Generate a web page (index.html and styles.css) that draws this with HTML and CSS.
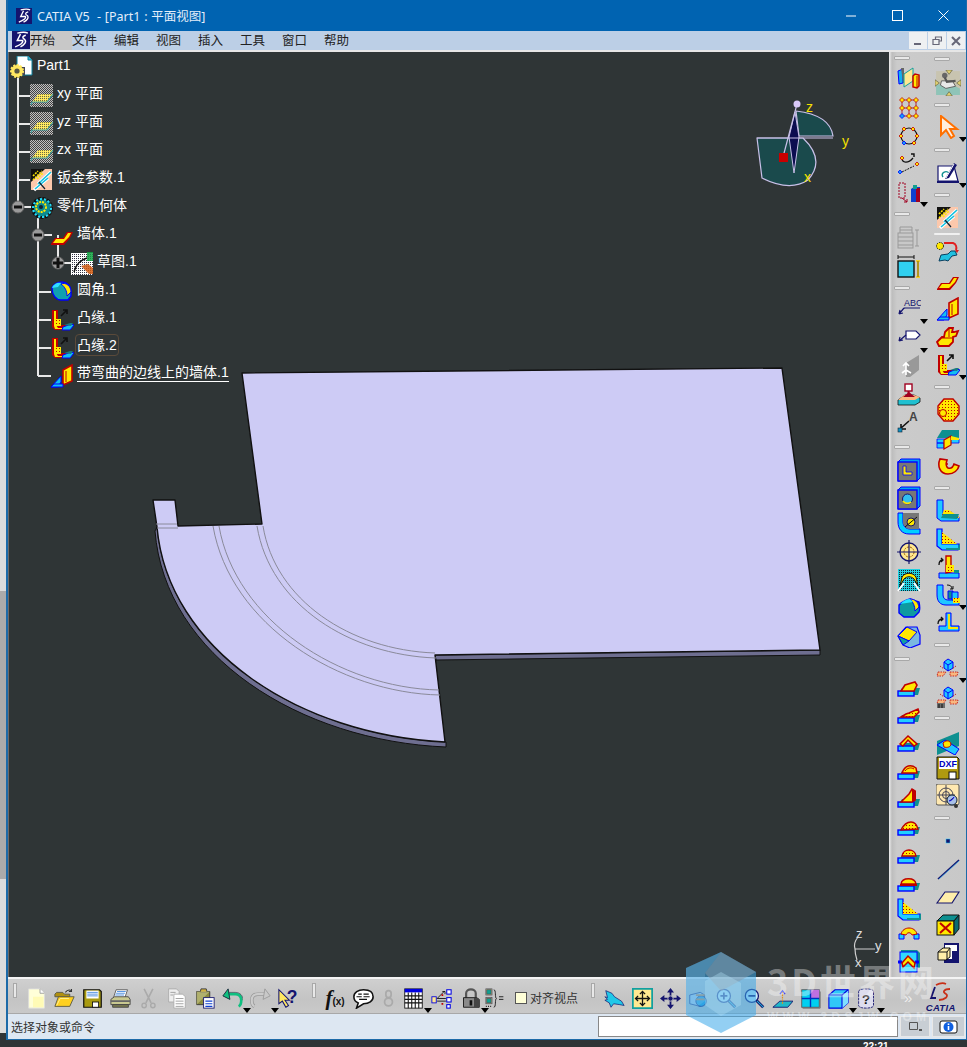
FILE: index.html
```html
<!DOCTYPE html>
<html lang="zh">
<head>
<meta charset="utf-8">
<title>CATIA V5</title>
<link rel="stylesheet" href="styles.css">
</head>
<body>
<svg class="defs" aria-hidden="true">
<defs>
<pattern id="ck" width="2" height="2" patternUnits="userSpaceOnUse"><rect width="2" height="2" fill="#c0c0c0"/><rect width="1" height="1" fill="#444"/><rect x="1" y="1" width="1" height="1" fill="#444"/></pattern>
<pattern id="yk" width="3" height="3" patternUnits="userSpaceOnUse"><rect width="3" height="3" fill="#ffe800"/><rect width="1" height="1" fill="#c00000"/></pattern>
<pattern id="pk" width="2" height="2" patternUnits="userSpaceOnUse"><rect width="2" height="2" fill="#ffe860"/><rect width="1" height="1" fill="#6a6a40"/></pattern>
<pattern id="wk" width="2" height="2" patternUnits="userSpaceOnUse"><rect width="2" height="2" fill="#fff"/><rect width="1" height="1" fill="#334"/></pattern>
<pattern id="cy" width="2" height="2" patternUnits="userSpaceOnUse"><rect width="2" height="2" fill="#20d0e0"/><rect width="1" height="1" fill="#123"/></pattern>
<symbol id="ds" viewBox="0 0 17 17"><rect width="17" height="17" fill="#14146e"/><path d="M5 2c4-1 8-1 10 0M8 3 5 9h5c1 2-2 4-7 6M13 4c-4 1-3 3-1 4 2 2 0 5-4 7" fill="none" stroke="#fff" stroke-width="1.4"/></symbol>
<symbol id="part" viewBox="0 0 24 24"><path d="M7 0h11l4 4v15H7z" fill="#fff" stroke="#0a7f9a"/><path d="M18 0v4h4" fill="#4bd" stroke="#0a7f9a"/><path d="M10 11h5v8h-5z" fill="#445"/><circle cx="7" cy="15" r="6" fill="#ffe860" stroke="#ffe860" stroke-width="2" stroke-dasharray="2 1.4"/><circle cx="7" cy="15" r="2.6" fill="#554"/></symbol>
<symbol id="plane" viewBox="0 0 24 24"><rect width="23" height="23" fill="url(#ck)"/><path d="M2 18 8 10h15l-6 8z" fill="url(#pk)"/><path d="M1 21 2 18h15l6-8" fill="none" stroke="#3a9a9a" stroke-width="1.2"/></symbol>
<symbol id="sheet" viewBox="0 0 24 24"><rect x="1" y="1" width="21" height="21" fill="#fcc8ac"/><path d="M1 1h14L1 14z" fill="#111"/><path d="M3 8l5-5M3 12l9-9M7 11l6-6" stroke="#ffe800" stroke-width="1.6" stroke-dasharray="2 1"/><path d="M8 16 21 4M4 22 18 10" stroke="#fff" stroke-width="3.4"/><path d="M8 16 21 4M5 21 18 10" stroke="#12c0e0" stroke-width="1.6"/><path d="M9 14l6 7" stroke="#123" stroke-width="1.2"/></symbol>
<symbol id="body" viewBox="0 0 24 24"><circle cx="12" cy="12" r="9.5" fill="#0c8a90" stroke="#111" stroke-width="3" stroke-dasharray="3 1.5"/><circle cx="12" cy="12" r="9" fill="none" stroke="#22e0ff" stroke-width="2" stroke-dasharray="2 2"/><circle cx="11" cy="11" r="5" fill="none" stroke="#ffe800" stroke-width="2" stroke-dasharray="2 1"/><circle cx="11" cy="11" r="2" fill="#123"/></symbol>
<symbol id="wall" viewBox="0 0 24 24"><path d="M1 20 5 14H13L17 8H23L20 14 14 21H1Z" fill="#c00000"/><path d="M3 19 6 15H14L18 9H21L19 13 13 19Z" fill="#ffe800"/></symbol>
<symbol id="sketch" viewBox="0 0 24 24"><rect x="1" y="1" width="22" height="22" fill="url(#wk)"/><rect x="17" y="0" width="6" height="9" fill="#10a040" opacity=".85"/><path d="M4 20C6 12 10 8 17 6" fill="none" stroke="#111" stroke-width="1.4"/><path d="M11 14l8 8h4v-6l-5-4z" fill="#d05a10" opacity=".85"/></symbol>
<symbol id="fillet" viewBox="0 0 24 24"><path d="M2 8c1-4 6-6 10-6 5 0 9 4 9 9v5l-3 4H11c-5 0-9-5-9-12z" fill="#10a0b0" stroke="#0000ff" stroke-width="1.4"/><path d="M11 4c5-2 10 2 10 8l-4 4c0-5-2-9-6-12z" fill="#ffe800" stroke="#0000ff"/><path d="M2 8c1-4 6-6 9-5l-3 4z" fill="#30e0ff"/></symbol>
<symbol id="flange" viewBox="0 0 24 24"><path d="M2 2h6v13l2 2h13l-3 5H5l-3-3z" fill="#c00000"/><path d="M4 3h2v14l2 3h5v1H5l-1-3z" fill="#ffe800"/><rect x="6" y="11" width="5" height="7" fill="url(#yk)"/><path d="M13 19l8-3 3 1-4 5h-8z" fill="#12c0f0" stroke="#0000ff"/><path d="M14 17l6-2h3l-2 3z" fill="#1a7a80"/><path d="M11 8l6-6M13 2h4v4" fill="none" stroke="#111" stroke-width="1.6"/></symbol>
<symbol id="wbend" viewBox="0 0 24 24"><path d="M13 6l9-5v16l-9 4z" fill="#ffe800" stroke="#c00000" stroke-width="1.6"/><path d="M16 7v11" stroke="#c00000"/><path d="M1 23 11 12v6l-3 5z" fill="#12c0f0" stroke="#0000ff"/><path d="M1 23h12v-3H4z" fill="#12c0f0" stroke="#0000ff"/></symbol>
<symbol id="assem" viewBox="0 0 24 24"><path d="M1 4 6 2v14l-4 1z" fill="#12b0f0" stroke="#0000ff"/><path d="M4 1h3v15H6z" fill="#666"/><path d="M7 20V7l9-6v13z" fill="#ffe890" stroke="#10a0a0"/><path d="M16 9l2-2 4 1v11l-2 2-4-1z" fill="#ffe800" stroke="#c00000" stroke-width="1.5"/><path d="M20 9v12" stroke="#c00000"/></symbol>
<symbol id="grid" viewBox="0 0 24 24"><path d="M5 4v16M12 4v16M19 4v16M3 4h18M3 12h18M3 20h18" stroke="#a00020" fill="none" stroke-width=".8"/><g fill="#ffe800" stroke="#c00000" stroke-width=".8"><path d="M5 1.500l2.500 2.500-2.500 2.500-2.500-2.500z"/><path d="M12 1.500l2.500 2.500-2.500 2.500-2.500-2.500zM19 1.500l2.500 2.500-2.500 2.500-2.500-2.500zM5 9.500l2.500 2.500-2.500 2.500-2.500-2.500zM12 9.500l2.500 2.500-2.500 2.500-2.500-2.500zM19 9.500l2.500 2.500-2.500 2.500-2.500-2.500zM12 17.500l2.500 2.500-2.500 2.500-2.500-2.500zM19 17.500l2.500 2.500-2.500 2.500-2.500-2.500z"/></g><path d="M5 17.500l2.500 2.500-2.500 2.500-2.500-2.500z" fill="#12a0ff" stroke="#0000ff" stroke-width=".8"/></symbol>
<symbol id="ring" viewBox="0 0 24 24"><circle cx="12" cy="12" r="8" fill="none" stroke="#111" stroke-width="1.2"/><g fill="#ffe800" stroke="#c00000" stroke-width=".8"><path d="M4 10l2 2-2 2-2-2zM20 10l2 2-2 2-2-2zM7 3l2 2-2 2-2-2zM16 3l2 2-2 2-2-2zM17 17l2 2-2 2-2-2z"/></g><path d="M7 17l2 2-2 2-2-2z" fill="#12a0ff" stroke="#0000ff" stroke-width=".8"/></symbol>
<symbol id="pts" viewBox="0 0 24 24"><path d="M5 6c0 5 6 6 11 0" fill="none" stroke="#111" stroke-width="1.2"/><path d="M14 2h3v3" fill="none" stroke="#111" stroke-width="1.4"/><path d="M5 20 17 14" stroke="#111" stroke-dasharray="2 1"/><path d="M5 4l2 2-2 2-2-2z" fill="#ffe800" stroke="#c00000" stroke-width=".8"/><path d="M20 10l2 2-2 2-2-2z" fill="#ffe800" stroke="#c00000" stroke-width=".8"/><path d="M3 18l2 2-2 2-2-2z" fill="#12a0ff" stroke="#0000ff" stroke-width=".8"/></symbol>
<symbol id="cyl" viewBox="0 0 24 24"><path d="M2 3h6v15H2z" fill="none" stroke="#a00020" stroke-dasharray="2 1"/><path d="M5 18l5 4M10 22v-3M10 22H7" stroke="#a00020" fill="none"/><path d="M14 9l3-2h6v15h-9z" fill="#0c40d0"/><path d="M19 8h4v14h-4z" fill="#a00020"/><path d="M16 5h4v4h-4z" fill="#10a090"/></symbol>
<symbol id="gtable" viewBox="0 0 24 24"><g fill="none" stroke="#999"><path d="M3 1h12M3 4h12M3 1v6M15 1v6"/><rect x="1" y="7" width="15" height="15" fill="#c8c8c8"/><path d="M1 11h15M1 15h15M1 19h15M20 4v16M18 4h4M18 20h4"/></g></symbol>
<symbol id="dimbox" viewBox="0 0 24 24"><rect x="1" y="7" width="16" height="16" fill="#30d0f0" stroke="#111" stroke-width="1.4"/><path d="M1 3h16M1 1v4M17 1v4" stroke="#111" fill="none"/><path d="M21 7v16M19 7h4M19 23h4" stroke="#ffd000" fill="none" stroke-width="1.6"/><path d="M21 7v16" stroke="#111" stroke-width=".6"/></symbol>
<symbol id="abc" viewBox="0 0 24 24"><text x="7" y="9" font-family="Liberation Sans,sans-serif" font-size="9" fill="#14146e">ABC</text><path d="M7 11H23M7 11 2 17M2 17l1-4M2 17l4-1" fill="none" stroke="#14146e" stroke-width="1.2"/></symbol>
<symbol id="flag" viewBox="0 0 24 24"><path d="M9 5h10l4 4-4 4H9z" fill="#fff" stroke="#14146e" stroke-width="1.2"/><path d="M9 9 2 15M2 15l1-4M2 15l4-1" fill="none" stroke="#14146e" stroke-width="1.2"/></symbol>
<symbol id="gshape" viewBox="0 0 24 24"><path d="M9 9 22 1v15l-9 7H9z" fill="#999"/><path d="M6 12l3-3 3 3M9 9v12M5 19l4-3 5 3" fill="none" stroke="#fff" stroke-width="1.6"/></symbol>
<symbol id="pin" viewBox="0 0 24 24"><path d="M1 18 8 13h9l6 3v4l-5 3H1z" fill="#20c0d0" stroke="#111" stroke-width=".8"/><path d="M1 18h17l5-3-6-2H7z" fill="#f8b880"/><path d="M6 15h12l-6-5z" fill="#a00020"/><rect x="8" y="2" width="7" height="7" fill="#fff" stroke="#a00020" stroke-width="1.4"/><path d="M11.500 9v4" stroke="#a00020" stroke-width="2"/></symbol>
<symbol id="leader" viewBox="0 0 24 24"><text x="12" y="11" font-family="Liberation Sans,sans-serif" font-size="12" font-weight="700" fill="#444">A</text><path d="M12 11 3 19M4 14v5h5" fill="none" stroke="#111" stroke-width="1.6"/><rect x="1" y="18" width="4" height="4" fill="#1090c0" stroke="#123" stroke-width=".6"/></symbol>
<symbol id="sq-l" viewBox="0 0 24 24"><path d="M1 4 4 1h19v19l-3 3H1z" fill="#00a0f0" stroke="#0000ff"/><rect x="1" y="4" width="19" height="19" fill="#777" stroke="#0000ff" stroke-width="1.4"/><path d="M6 8h3v6h6v3H6z" fill="#ffe800" stroke="#0000ff" stroke-width=".8"/></symbol>
<symbol id="sq-o" viewBox="0 0 24 24"><path d="M1 4 4 1h19v19l-3 3H1z" fill="#00a0f0" stroke="#0000ff"/><rect x="1" y="4" width="19" height="19" fill="#777" stroke="#0000ff" stroke-width="1.4"/><circle cx="10.500" cy="13" r="5" fill="#30c0f0" stroke="#14146e"/><path d="M6 15c2 3 6 3 8 1" stroke="#ffe800" stroke-width="1.6" fill="none"/></symbol>
<symbol id="corner" viewBox="0 0 24 24"><path d="M1 1h5v9c0 4 3 7 7 7h10v5H12C5 22 1 17 1 10z" fill="#00d0ff" stroke="#0000ff"/><path d="M6 1h16v16h-9c-4 0-7-3-7-7z" fill="#777"/><circle cx="14" cy="10" r="4" fill="#ffe800" stroke="#14146e"/><path d="M8 15 20 5" stroke="#111"/></symbol>
<symbol id="cross" viewBox="0 0 24 24"><circle cx="12" cy="12" r="9" fill="#ffe890" stroke="#14146e" stroke-width="1.4"/><circle cx="12" cy="12" r="5" fill="none" stroke="#a06000" stroke-dasharray="2 1"/><path d="M12 0v24M0 12h24" stroke="#14146e" stroke-width="1.2"/></symbol>
<symbol id="arch" viewBox="0 0 24 24"><rect x="1" y="1" width="22" height="22" fill="url(#cy)"/><path d="M3 18 5 9c3-5 11-5 14 0l2 9-4-7c-3-3-7-3-10 0z" fill="#ffe800" stroke="#111"/><path d="M1 23l6-8M23 23l-6-8" stroke="#fff" stroke-width="2"/></symbol>
<symbol id="fillet2" viewBox="0 0 24 24"><path d="M2 9c3-3 7-5 11-6l9 3c1 5 1 8 0 10l-5 5H7l-5-4z" fill="#0e9aa0" stroke="#0000ff" stroke-width="1.4"/><path d="M13 3c5 0 8 3 9 8l-4 4c0-5-2-9-5-12z" fill="#ffe800" stroke="#0000ff"/><path d="M3 8c3-3 6-5 10-5l3 3z" fill="#20e8ff"/></symbol>
<symbol id="chamfer" viewBox="0 0 24 24"><path d="M1 12 9 3h11l3 8v9l-10 4-7-3z" fill="#7ab8e0" stroke="#0000ff" stroke-width="1.2"/><path d="M1 12 10 3l10 5-8 9z" fill="#ffe800" stroke="#0000ff"/><path d="M1 12l5 9 6-4z" fill="#10a0a0" stroke="#0000ff"/></symbol>
<symbol id="fb" viewBox="0 0 24 24"><path d="M1 21l4-7h18l-2 7z" fill="#0e9090"/><rect x="1" y="17" width="16" height="5" fill="#20d0ff" stroke="#0000ff" stroke-width="1.4"/></symbol>
<symbol id="f1" viewBox="0 0 24 24"><use href="#fb"/><path d="M4 17l4-6 10-3 2 3-3 6z" fill="#ffe800" stroke="#c00000" stroke-width="1.6"/></symbol>
<symbol id="f2" viewBox="0 0 24 24"><use href="#fb"/><path d="M4 16l5-3 3-1 9-4 1 3-5 5z" fill="url(#yk)" stroke="#c00000" stroke-width="1.5"/></symbol>
<symbol id="f3" viewBox="0 0 24 24"><use href="#fb"/><path d="M3 15 11 7l9 8-3 2-6-6-5 6z" fill="#ffe800" stroke="#c00000" stroke-width="1.5"/></symbol>
<symbol id="f4" viewBox="0 0 24 24"><use href="#fb"/><path d="M5 16c3-8 9-9 14-5l1 5z" fill="#ffe800" stroke="#c00000" stroke-width="1.5"/><path d="M8 14c2-3 6-4 9-2" fill="none" stroke="#c00000"/></symbol>
<symbol id="f5" viewBox="0 0 24 24"><use href="#fb"/><path d="M4 17 12 9l3-5 3 2v9l-3 2z" fill="#ffe800" stroke="#c00000" stroke-width="1.5"/><path d="M15 4l4 2v9l-4 2z" fill="#c00000"/></symbol>
<symbol id="f6" viewBox="0 0 24 24"><use href="#fb"/><path d="M4 17c3-6 6-8 10-8s6 3 7 7z" fill="url(#yk)" stroke="#c00000" stroke-width="1.4"/></symbol>
<symbol id="f7" viewBox="0 0 24 24"><use href="#fb"/><path d="M5 15c1-8 13-8 14 0z" fill="url(#yk)" stroke="#c00000" stroke-width="1.4"/></symbol>
<symbol id="f8" viewBox="0 0 24 24"><use href="#fb"/><path d="M4 15c1-7 14-7 15 0z" fill="#ffe800" stroke="#c00000" stroke-width="1.4"/><path d="M3 16h17" stroke="#c00000" stroke-width="2"/></symbol>
<symbol id="f9" viewBox="0 0 24 24"><path d="M1 2h5v15h17v4l-1 2H6l-5-4z" fill="#20d0ff" stroke="#0000ff" stroke-width="1.2"/><path d="M6 5l15 12H6z" fill="url(#yk)"/><path d="M10 22h13l1-5" fill="none" stroke="#0e9090" stroke-width="2"/></symbol>
<symbol id="f10" viewBox="0 0 24 24"><path d="M2 13h5v5H2zM17 13h5v5h-5z" fill="#20d0ff" stroke="#0000ff"/><path d="M4 13C6 5 18 5 20 13l-5 1c-1-3-5-3-6 0z" fill="#ffe800" stroke="#c00000"/></symbol>
<symbol id="f11" viewBox="0 0 24 24"><path d="M4 1h16l3 3v15H4z" fill="#0e9090"/><rect x="3" y="3" width="17" height="20" fill="#30d8ff" stroke="#0000ff"/><path d="M1 13h4M18 13h4" stroke="#0000ff" stroke-width="3"/><path d="M5 14 11 7l7 7-1 5-6-6-5 5z" fill="#ffe800" stroke="#c00000" stroke-width="1.5"/></symbol>
<symbol id="photo" viewBox="0 0 24 24"><rect x="1" y="1" width="22" height="22" fill="#c8c4b0"/><path d="M1 14c6-2 14-1 22 3v6H1z" fill="#8fc4b8"/><path d="M6 10h10l3 5-9 2-5-3z" fill="#e8e8e8" stroke="#555" stroke-width=".8"/><circle cx="9" cy="5" r="2.500" fill="#666"/><path d="M9 7l2 4 8-1" stroke="#555" stroke-width="2" fill="none"/><path d="M10 0h6l-3 4zM10 24h6l-3-4zM0 9v6l4-3zM24 9v6l-4-3z" fill="#e0d070" stroke="#443" stroke-width=".5"/></symbol>
<symbol id="cursor" viewBox="0 0 24 24"><path d="M5 1v19l5-5 5 8 3-2-4-7h7z" fill="#ffeedd" stroke="#ff7000" stroke-width="2"/></symbol>
<symbol id="pencil" viewBox="0 0 24 24"><path d="M2 5h16l4 15H2z" fill="#fff" stroke="#14146e" stroke-width="1.200"/><rect x="1" y="20" width="22" height="2" fill="#14146e"/><path d="M7 16c-3-4 3-7 6-4" fill="none" stroke="#109090" stroke-width="1.4"/><path d="M9 18 18 2l3 2-8 13z" fill="#14146e"/><path d="M10 17 18 3" stroke="#fff"/></symbol>
<symbol id="hook" viewBox="0 0 24 24"><circle cx="4" cy="6" r="3.500" fill="#ffe800" stroke="#111" stroke-dasharray="1.500 1"/><path d="M8 3h9c3 1 4 4 3 7" fill="none" stroke="#e02020" stroke-width="2"/><path d="M19 10l2 3 2-3" fill="#e02020"/><path d="M3 21l2-6 7-1 3-3h4l2 4-5 1-4 5-3-1z" fill="#20c0e0" stroke="#0a4060"/></symbol>
<symbol id="extr" viewBox="0 0 24 24"><path d="M1 17l5-5h2l1-5 4-4h4l-1 4h2l4-1-2 5-3 1v5l-4 4H3z" fill="#ffe800" stroke="#c00000" stroke-width="1.800"/><path d="M6 13h10M13 4v8" stroke="#c00000"/></symbol>
<symbol id="gearplate" viewBox="0 0 24 24"><path d="M2 8l6-7h9l6 7v8l-6 7H8l-6-7z" fill="url(#yk)" stroke="#c00000" stroke-width="1.4"/><circle cx="7" cy="15" r="3.500" fill="#ffe800" stroke="#c00000"/></symbol>
<symbol id="cut" viewBox="0 0 24 24"><path d="M1 12l5-8h17v8z" fill="#0e9090"/><path d="M1 13h22v4H1zM1 17h7v5H1z" fill="#20d0ff" stroke="#0000ff" stroke-width=".8"/><path d="M8 14l7-4v9l-7 4z" fill="#ffe800" stroke="#c00000" stroke-width="1.2"/><path d="M15 10l8 2v2h-8z" fill="#ffe800"/></symbol>
<symbol id="chook" viewBox="0 0 24 24"><path d="M4 5c-3 7 0 15 8 15 6 0 10-4 11-8l-5-2c-1 3-3 5-6 4-3-2-2-5-1-8z" fill="#ffe800" stroke="#c00000" stroke-width="1.600"/><circle cx="11" cy="10" r="1" fill="#c00000"/></symbol>
<symbol id="v1" viewBox="0 0 24 24"><path d="M1 1h6v14l3 3h13v4H5l-4-3z" fill="#20c8ff" stroke="#0000ff"/><path d="M6 16 8 11h5l10 7v1H7z" fill="url(#yk)"/><path d="M5 19l2-4h16l-2 5z" fill="#0e9090"/></symbol>
<symbol id="v3" viewBox="0 0 24 24"><path d="M3 18h20v5H3z" fill="#20c8ff" stroke="#0000ff"/><path d="M10 1h5v16l-5 1z" fill="#ffe800" stroke="#c00000" stroke-width="1.400"/><rect x="10" y="10" width="8" height="7" fill="url(#yk)"/><path d="M18 15h5v3h-5z" fill="#0e9090"/><path d="M3 10c0-3 1-5 4-5M5 3l2 2-2 2" fill="none" stroke="#111" stroke-width="1.300"/></symbol>
<symbol id="v4" viewBox="0 0 24 24"><path d="M1 2h6v10c0 3 2 5 5 5h11v5H10c-6 0-9-4-9-10z" fill="#20c8ff" stroke="#0000ff"/><path d="M12 8h5v8h-5z" fill="#0e9090" stroke="#0000ff"/><path d="M16 9h6v8h-6z" fill="#20c8ff" stroke="#0000ff"/><rect x="17" y="15" width="7" height="5" fill="url(#yk)"/><path d="M11 2c3 0 5 1 5 4M14 6h3V3" fill="none" stroke="#111"/></symbol>
<symbol id="v5" viewBox="0 0 24 24"><path d="M10 2h5v13h8v5H3v-5h7z" fill="#20c8ff" stroke="#0000ff"/><path d="M13 3v14h9" fill="none" stroke="#ffe800" stroke-width="1.800"/><path d="M2 13c0-3 2-5 5-5M5 6l2 2-2 2" fill="none" stroke="#111" stroke-width="1.300"/></symbol>
<symbol id="unf" viewBox="0 0 24 24"><path d="M8 6l4-3 5 3v6l-5 3-4-3z" fill="#20c8ff" stroke="#0000ff"/><path d="M2 16h8l-3 4H1zM14 16h8l-1 4h-7zM4 10l4 3M20 10l-4 3" stroke="#c00000" fill="#f8b880" stroke-width=".8" stroke-dasharray="1.500 1"/><path d="M8 6l4 3 5-3M12 9v6" stroke="#0000ff" fill="none"/></symbol>
<symbol id="unf2" viewBox="0 0 24 24"><use href="#unf"/><path d="M1 19h9v6H1z" fill="#c8c8c8"/><path d="M1 20h8M1 22h8M1 24h8M3 20v4M6 20v4" stroke="#111"/></symbol>
<symbol id="seam" viewBox="0 0 24 24"><path d="M1 24V10L23 1v14z" fill="#0e9090"/><path d="M1 14l8-5 14 9-4 6z" fill="#20c8ff" stroke="#0000ff"/><path d="M7 12c3-3 7-3 8 1 0 3-4 4-7 3z" fill="#ffe800" stroke="#c00000"/></symbol>
<symbol id="dxf" viewBox="0 0 24 24"><path d="M1 1h20l2 2v20H1z" fill="#b09a10" stroke="#111"/><rect x="3" y="2" width="18" height="11" fill="#fff"/><text x="12" y="11" text-anchor="middle" font-family="Liberation Sans,sans-serif" font-weight="700" font-size="9" fill="#0000c0">DXF</text><rect x="13" y="16" width="7" height="7" fill="#fff" stroke="#111"/></symbol>
<symbol id="target" viewBox="0 0 24 24"><rect x="0" y="0" width="23" height="21" rx="2" fill="#ffe8b0" stroke="#555"/><circle cx="10" cy="11" r="7" fill="none" stroke="#445"/><circle cx="10" cy="11" r="3.500" fill="none" stroke="#445"/><path d="M10 1v20M1 11h18" stroke="#445"/><circle cx="16" cy="16" r="5" fill="#a8c0e8" stroke="#123"/><path d="M13 17c2 0 4-2 5-4" stroke="#00f"/><circle cx="20" cy="22" r="2" fill="#333"/></symbol>
<symbol id="dot" viewBox="0 0 24 24"><rect x="10" y="10" width="4" height="4" fill="#14146e" stroke="#20d0ff" stroke-width=".5"/></symbol>
<symbol id="line" viewBox="0 0 24 24"><path d="M2 22 23 3" stroke="#14146e" stroke-width="1.600"/><path d="M3 22 23 4" stroke="#20b0f0" stroke-width=".6"/></symbol>
<symbol id="pl" viewBox="0 0 24 24"><path d="M1 18 9 7h14l-7 11z" fill="#ffeeaa" stroke="#14146e" stroke-width="1.200"/></symbol>
<symbol id="box" viewBox="0 0 24 24"><path d="M1 8l6-6h16l-5 6z" fill="#0e9090" stroke="#111"/><rect x="1" y="8" width="17" height="14" fill="#ffe800" stroke="#111"/><path d="M18 8l5-6v14l-5 6z" fill="#0a6a70" stroke="#111"/><path d="M4 10l11 10M15 10 4 20" stroke="#c00000" stroke-width="2"/></symbol>
<symbol id="block" viewBox="0 0 24 24"><path d="M8 2h15v20H8z" fill="#14146e"/><path d="M9 4h12v6h-5v8H9z" fill="#fff"/><path d="M2 11l5-4h7v9l-4 3H2z" fill="#ffeeaa" stroke="#111"/><path d="M2 11h9v8M11 11l3-4" stroke="#111" fill="none"/></symbol>
<symbol id="new" viewBox="0 0 24 24"><path d="M3 1h13l5 5v17H3z" fill="#ffffd8" stroke="#ddd"/><path d="M16 1v5h5" fill="#fff" stroke="#999"/><rect x="8" y="10" width="12" height="12" fill="#fff8a0" opacity=".6"/></symbol>
<symbol id="open" viewBox="0 0 24 24"><path d="M1 7l2-2h7l2 2h6v3H1z" fill="#b09010" stroke="#554"/><path d="M1 21 5 10h18l-5 11z" fill="#ffd020" stroke="#554"/><path d="M3 20 7 12h10" stroke="#fff4a0" fill="none"/><path d="M13 5c2-3 5-3 7-2M20 1v3h-3" fill="none" stroke="#333" stroke-width="1.200"/></symbol>
<symbol id="save" viewBox="0 0 24 24"><path d="M2 2h18l2 2v18H2z" fill="#a89a10" stroke="#111" stroke-width="1.400"/><rect x="5" y="3" width="14" height="9" fill="#fff"/><path d="M6 5h12M6 7h12M6 9h12" stroke="#4488dd"/><rect x="12" y="16" width="7" height="6" fill="#fff" stroke="#111"/></symbol>
<symbol id="print" viewBox="0 0 24 24"><path d="M7 2h13l-3 9H4z" fill="#fff" stroke="#555"/><path d="M8 4h10M7 6h10M6 8h10" stroke="#4488dd"/><path d="M1 13l4-3h16l2 3v6H1z" fill="#c8c890" stroke="#444"/><path d="M1 15h22" stroke="#666" stroke-width="2"/><path d="M3 19h18v3H3z" fill="#7a7a50" stroke="#444"/></symbol>
<symbol id="scis" viewBox="0 0 24 24"><path d="M7 1l8 16M17 1 9 17" stroke="#aaa" stroke-width="1.800"/><circle cx="7" cy="20" r="2.500" fill="none" stroke="#aaa" stroke-width="1.600"/><circle cx="17" cy="20" r="2.500" fill="none" stroke="#aaa" stroke-width="1.600"/></symbol>
<symbol id="copy" viewBox="0 0 24 24"><path d="M3 1h9l3 3v12H3z" fill="#eee" stroke="#aaa"/><path d="M9 7h10l3 3v13H9z" fill="#fff" stroke="#aaa"/><path d="M11 12h9M11 15h9M11 18h9M11 21h9M5 5h6M5 8h3" stroke="#999"/></symbol>
<symbol id="paste" viewBox="0 0 24 24"><path d="M3 4h15v15H3z" fill="#8a8a40" stroke="#333"/><path d="M8 1h6l1 4H7z" fill="#d0b040" stroke="#333"/><path d="M3 4h15L3 19z" fill="#c0c080" opacity=".7"/><rect x="11" y="11" width="12" height="12" fill="#fff" stroke="#14146e"/><path d="M13 15h8M13 18h8M13 21h8" stroke="#1040d0" stroke-width="1.400"/></symbol>
<symbol id="undo" viewBox="0 0 24 24"><path d="M7 7h8c5 0 7 3 7 7s-1 6-3 7" fill="none" stroke="#10c080" stroke-width="3"/><path d="M7 1 1 9l8 4z" fill="#10c080" stroke="#123"/><path d="M8 5h7c6 0 9 4 9 9" fill="none" stroke="#123" stroke-width=".6"/></symbol>
<symbol id="redo" viewBox="0 0 24 24"><path d="M17 7H9c-5 0-7 3-7 7s1 6 3 7" fill="none" stroke="#999" stroke-width="4"/><path d="M17 7H9c-5 0-7 3-7 7s1 6 3 7" fill="none" stroke="#ccc" stroke-width="2.400"/><path d="M17 1l6 8-8 4z" fill="#c8c8c8" stroke="#999"/></symbol>
<symbol id="whelp" viewBox="0 0 24 24"><path d="M1 2v16l4-3 4 7 3-2-4-6h5z" fill="#ffe860" stroke="#14146e" stroke-width="1.200"/><text x="16" y="17" text-anchor="middle" font-family="Liberation Sans,sans-serif" font-size="20" font-weight="700" fill="#14146e">?</text></symbol>
<symbol id="bubble" viewBox="0 0 24 24"><path d="M12 2c7 0 11 3 11 8s-5 8-11 8l-8 5 2-6c-3-1-5-4-5-7 0-5 5-8 11-8z" fill="#fff" stroke="#111" stroke-width="1.800"/><path d="M6 7h4M12 7h6M4 10h6M12 10h7M7 13h9" stroke="#111" stroke-width="1.200"/></symbol>
<symbol id="chain" viewBox="0 0 24 24"><rect x="9" y="3" width="6" height="8" rx="3" fill="none" stroke="#aaa" stroke-width="2"/><circle cx="12" cy="16" r="4.500" fill="none" stroke="#aaa" stroke-width="2"/></symbol>
<symbol id="tbl" viewBox="0 0 24 24"><rect x="2" y="1" width="20" height="22" fill="#fff" stroke="#111"/><rect x="2" y="1" width="20" height="4" fill="#0000e0"/><path d="M2 9h20M2 13h20M2 17h20M6 5v18M10 5v18M14 5v18M18 5v18" stroke="#111" stroke-width="1.200"/></symbol>
<symbol id="rel" viewBox="0 0 24 24"><rect x="1" y="10" width="5" height="7" fill="#ffe890" stroke="#0000e0"/><g fill="#fff" stroke="#0000e0" stroke-width="1.200"><rect x="18" y="2" width="5" height="5"/><rect x="18" y="11" width="5" height="5"/><rect x="18" y="19" width="4" height="4"/></g><path d="M7 12h10M7 12l8-8M13 4h3v3M7 15h10" stroke="#111" fill="none"/><path d="M12 8h2M12 18h2" stroke="#c00000" stroke-width="2"/></symbol>
<symbol id="lock" viewBox="0 0 24 24"><path d="M7 11V6c0-6 11-6 11 0v5" fill="none" stroke="#555" stroke-width="2.500"/><path d="M4 11h15l3 2v9H4z" fill="#8a8a8a" stroke="#111"/><path d="M16 11h3l3 2v9h-6z" fill="#444"/><rect x="11" y="14" width="3" height="6" fill="#111"/></symbol>
<symbol id="param" viewBox="0 0 24 24"><g stroke="#445" stroke-width=".8"><rect x="1" y="1" width="7" height="7" fill="#ffe890"/><rect x="2" y="2" width="5" height="5" fill="#10a090"/><rect x="1" y="11" width="7" height="7" fill="#ffe890"/><rect x="2" y="12" width="5" height="5" fill="#10a090"/></g><path d="M1 21h1M3.500 21h1M6 21h1" stroke="#111" stroke-width="1.300"/><path d="M10 2c3 0 1 9 3 10-2 1 0 10-3 10" fill="none" stroke="#111"/><path d="M16 10h5M16 13h5" stroke="#111"/></symbol>
<symbol id="fly" viewBox="0 0 24 24"><path d="M2 3l7 3 3 4 8 5 3 5-5-1-7-1-3 4-2-5-5-3 3-1-3-3 3 1z" fill="#20c8e8" stroke="#14146e" stroke-width=".8"/></symbol>
<symbol id="fit" viewBox="0 0 24 24"><rect x="1" y="1" width="22" height="22" fill="#ffe890" stroke="#10a0a0" stroke-width="2"/><path d="M12 4v16M4 12h16M9 7l3-3 3 3M9 17l3 3 3-3M7 9l-3 3 3 3M17 9l3 3-3 3" fill="none" stroke="#111" stroke-width="1.500"/></symbol>
<symbol id="move" viewBox="0 0 24 24"><path d="M12 3v18M3 12h18" stroke="#14146e" stroke-width="2"/><path d="M12 0l4 5H8zM12 24l4-5H8zM0 12l5-4v8zM24 12l-5-4v8z" fill="#14146e"/><circle cx="12" cy="12" r="3" fill="#14146e" stroke="#c8c8c8"/></symbol>
<symbol id="rot" viewBox="0 0 24 24"><path d="M2 8l12-3 5 3v10l-5 3-12-3z" fill="#c0d8f0" stroke="#14146e"/><circle cx="15" cy="15" r="6" fill="#20a0e0" stroke="#14146e"/><path d="M9 8h10M9 13h10" stroke="#e08030" stroke-width="2"/></symbol>
<symbol id="zin" viewBox="0 0 24 24"><path d="M14 14l8 8" stroke="#14146e" stroke-width="3.400"/><path d="M14 14l8 8" stroke="#20c0e0" stroke-width="1.200"/><circle cx="9" cy="9" r="7.500" fill="#c8e8f8" stroke="#14146e" stroke-width="1.400"/><path d="M5 9h8M9 5v8" stroke="#14146e" stroke-width="2"/></symbol>
<symbol id="zout" viewBox="0 0 24 24"><path d="M14 14l8 8" stroke="#14146e" stroke-width="3.400"/><path d="M14 14l8 8" stroke="#20c0e0" stroke-width="1.200"/><circle cx="9" cy="9" r="7.500" fill="#c8e8f8" stroke="#14146e" stroke-width="1.400"/><path d="M5 9h8" stroke="#14146e" stroke-width="2"/></symbol>
<symbol id="norm" viewBox="0 0 24 24"><path d="M1 22 9 15h15l-6 7z" fill="#20b8c8" stroke="#14146e"/><path d="M12 18V4" stroke="#e09020" stroke-dasharray="2 1" stroke-width="1.400"/><path d="M9 7l3-4 3 4" fill="none" stroke="#2030f0" stroke-width="1.200"/></symbol>
<symbol id="split" viewBox="0 0 24 24"><rect x="2" y="2" width="20" height="20" fill="#00d0f0" stroke="#555"/><rect x="12" y="2" width="10" height="10" fill="#c070e0"/><path d="M2 12h20M12 2v20" stroke="#0030c0" stroke-width="1.600"/><path d="M3 23h20V4" fill="none" stroke="#666"/></symbol>
<symbol id="cube" viewBox="0 0 24 24"><path d="M1 8l7-6h15v15l-7 6H1z" fill="#30c8f8" stroke="#0000e0" stroke-width="1.200"/><path d="M16 8l7-6v15l-7 6z" fill="#80e0ff"/><path d="M1 8h15v15M16 8l7-6" fill="none" stroke="#0000e0" stroke-width="1.200"/></symbol>
<symbol id="qhelp" viewBox="0 0 24 24"><path d="M3 4c0-4 17-4 17 0v16c0 4-17 4-17 0z" fill="#dde" stroke="#14146e" stroke-dasharray="3 1"/><text x="11.500" y="18" text-anchor="middle" font-family="Liberation Sans,sans-serif" font-size="15" font-weight="700" fill="#111">?</text></symbol>
</defs>
</svg>

<div class="screen">
  <div class="desk"><div class="thumb"></div></div>
  <div class="win">
    <header class="title">
      <svg class="tlogo"><use href="#ds"/></svg>
      <span class="ttext">CATIA V5&nbsp; - [Part1 : 平面视图]</span>
      <div class="wctl">
        <span class="wbtn"><svg width="10" height="10"><path d="M0 5h10" stroke="#fff"/></svg></span>
        <span class="wbtn"><svg width="11" height="11"><rect x=".5" y=".5" width="10" height="10" fill="none" stroke="#fff"/></svg></span>
        <span class="wbtn"><svg width="11" height="11"><path d="M.5.500l10 10M10.500.500l-10 10" stroke="#fff"/></svg></span>
      </div>
    </header>
    <nav class="menu">
      <svg class="mlogo"><use href="#ds"/></svg>
      <span class="mi on">开始</span><span class="mi">文件</span><span class="mi">编辑</span><span class="mi">视图</span><span class="mi">插入</span><span class="mi">工具</span><span class="mi">窗口</span><span class="mi">帮助</span>
      <div class="mctl">
        <span class="mbtn"><svg width="10" height="10"><path d="M1 8h7" stroke="#667" stroke-width="2"/></svg></span>
        <span class="mbtn"><svg width="10" height="10"><path d="M3.500 3V1h6v4H7M1 3.500h6v5H1z" fill="none" stroke="#667" stroke-width="1.200"/></svg></span>
        <span class="mbtn"><svg width="10" height="10"><path d="M1 1l8 8M9 1 1 9" stroke="#667" stroke-width="2"/></svg></span>
      </div>
    </nav>
    <main class="main">
      <section class="canvas">
        <svg class="model" viewBox="9 52 880 925" width="880" height="925">
          <path d="M157 527 C168 650 300 735 446 742 L446 747 C300 741 165 656 155 531Z" fill="#6e6e90" stroke="#111" stroke-width="1"/>
          <path d="M435 655 L820 650 L820 655 L436 660Z" fill="#6e6e90" stroke="#111" stroke-width="1"/>
          <path d="M242 373 L782 368 L820 650 L435 655 L445 742 C300 735 168 650 157 527 L153 500 L175 500 L178 526 L262 524Z" fill="#cdcbf5" stroke="#111" stroke-width="1.400" stroke-linejoin="round"/>
          <path d="M263 526 C275 600 350 650 435 653M257 526 C270 605 350 655 436 658M219 526 C235 620 340 688 439 690M213 526 C230 625 340 693 440 695M156 524 H177M157 528 H178" fill="none" stroke="#8a8a9a" stroke-width="1"/>
          <g fill="#1a4a4c" stroke="#c8c0e8" stroke-width="1.200">
            <path d="M796 111 Q830 115 833 136 L799 136Z"/>
            <path d="M757 138 L762 178 Q790 192 808 180 Q826 160 803 138Z"/>
          </g>
          <path d="M789 137 L795 112 L799 137 L794 173Z" fill="#0c0c50" stroke="#c8c0e8"/>
          <path d="M757 138H833M797 104 L783 157" fill="none" stroke="#c8c0e8" stroke-width="1.200"/>
          <circle cx="797" cy="104" r="3.500" fill="#d8c8f8"/>
          <rect x="779" y="153" width="9" height="9" fill="#c80000"/>
          <g class="axl">
            <text x="806" y="112">z</text><text x="842" y="146">y</text><text x="804" y="182">x</text>
          </g>
          <path d="M858 937 C854 942 854 946 855 949 H875 M855 949 C855 954 856 957 857 960" fill="none" stroke="#cfcfcf" stroke-width="1.200"/>
          <g class="axw">
            <text x="856" y="938">z</text><text x="875" y="950">y</text><text x="855" y="967">x</text>
          </g>
        </svg>
        <svg class="links" viewBox="9 52 100 340" width="100" height="340">
          <path d="M18 78V207M18 96H30M18 124H30M18 152H30M18 180H30M24 207H31M38 207V376M44 235H52M38 292H51M38 320H51M38 348H51M38 376H51M58 235V263M64 263H71" fill="none" stroke="#e8e8e8" stroke-width="2"/>
          <g fill="#9a9a9a" stroke="#666"><circle cx="18" cy="207" r="6"/><circle cx="38" cy="235" r="6"/><circle cx="58" cy="263" r="6"/></g>
          <path d="M14 207h8M34 235h8M53 263h10M58 258v10" stroke="#111" stroke-width="3"/>
        </svg>
        <ul class="tree">
          <li class="row root l0"><svg class="ti"><use href="#part"/></svg><span class="tx">Part1</span></li>
          <li class="row l1"><svg class="ti"><use href="#plane"/></svg><span class="tx">xy 平面</span></li>
          <li class="row l1"><svg class="ti"><use href="#plane"/></svg><span class="tx">yz 平面</span></li>
          <li class="row l1"><svg class="ti"><use href="#plane"/></svg><span class="tx">zx 平面</span></li>
          <li class="row l1"><svg class="ti"><use href="#sheet"/></svg><span class="tx">钣金参数.1</span></li>
          <li class="row l1"><svg class="ti"><use href="#body"/></svg><span class="tx">零件几何体</span></li>
          <li class="row l2"><svg class="ti"><use href="#wall"/></svg><span class="tx">墙体.1</span></li>
          <li class="row l3"><svg class="ti"><use href="#sketch"/></svg><span class="tx">草图.1</span></li>
          <li class="row l2"><svg class="ti"><use href="#fillet"/></svg><span class="tx">圆角.1</span></li>
          <li class="row l2"><svg class="ti"><use href="#flange"/></svg><span class="tx">凸缘.1</span></li>
          <li class="row l2"><svg class="ti"><use href="#flange"/></svg><span class="tx boxed">凸缘.2</span></li>
          <li class="row l2"><svg class="ti"><use href="#wbend"/></svg><span class="tx sel">带弯曲的边线上的墙体.1</span></li>
        </ul>
      </section>
      <aside class="side">
        <div class="col">
          <i class="hd first"></i>
          <span class="ic up2"><svg><use href="#assem"/></svg></span>
          <span class="ic dn1"><svg><use href="#grid"/></svg></span>
          <span class="ic"><svg><use href="#ring"/></svg></span>
          <span class="ic"><svg><use href="#pts"/></svg></span>
          <span class="ic dr"><svg><use href="#cyl"/></svg></span>
          <i class="hd"></i>
          <span class="ic dn1"><svg><use href="#gtable"/></svg></span>
          <span class="ic"><svg><use href="#dimbox"/></svg></span>
          <i class="hd"></i>
          <span class="ic up2 dr"><svg><use href="#abc"/></svg></span>
          <span class="ic dn1 dr"><svg><use href="#flag"/></svg></span>
          <span class="ic"><svg><use href="#gshape"/></svg></span>
          <span class="ic"><svg><use href="#pin"/></svg></span>
          <span class="ic"><svg><use href="#leader"/></svg></span>
          <i class="hd dn3"></i>
          <span class="ic"><svg><use href="#sq-l"/></svg></span>
          <span class="ic"><svg><use href="#sq-o"/></svg></span>
          <span class="ic up2"><svg><use href="#corner"/></svg></span>
          <span class="ic"><svg><use href="#cross"/></svg></span>
          <span class="ic"><svg><use href="#arch"/></svg></span>
          <span class="ic"><svg><use href="#fillet2"/></svg></span>
          <span class="ic"><svg><use href="#chamfer"/></svg></span>
          <i class="hd dn1"></i>
          <span class="ic dn4"><svg><use href="#f1"/></svg></span>
          <span class="ic up1"><svg><use href="#f2"/></svg></span>
          <span class="ic"><svg><use href="#f3"/></svg></span>
          <span class="ic"><svg><use href="#f4"/></svg></span>
          <span class="ic"><svg><use href="#f5"/></svg></span>
          <span class="ic"><svg><use href="#f6"/></svg></span>
          <span class="ic"><svg><use href="#f7"/></svg></span>
          <span class="ic"><svg><use href="#f8"/></svg></span>
          <span class="ic"><svg><use href="#f9"/></svg></span>
          <span class="ic up4"><svg><use href="#f10"/></svg></span>
          <span class="ic"><svg><use href="#f11"/></svg></span>
        </div>
        <div class="col">
          <i class="hd first2"></i>
          <span class="ic big"><svg><use href="#photo"/></svg></span>
          <i class="hd dn1"></i>
          <span class="ic up1 dr"><svg><use href="#cursor"/></svg></span>
          <i class="hd dn1"></i>
          <span class="ic dr"><svg><use href="#pencil"/></svg></span>
          <i class="hd"></i>
          <span class="ic"><svg><use href="#sheet"/></svg></span>
          <i class="hd long up5"></i>
          <span class="ic up4"><svg><use href="#hook"/></svg></span>
          <span class="ic dn1"><svg><use href="#wall"/></svg></span>
          <span class="ic"><svg><use href="#wbend"/></svg></span>
          <span class="ic"><svg><use href="#extr"/></svg></span>
          <span class="ic dr"><svg><use href="#flange"/></svg></span>
          <i class="hd"></i>
          <span class="ic"><svg><use href="#gearplate"/></svg></span>
          <span class="ic"><svg><use href="#cut"/></svg></span>
          <span class="ic"><svg><use href="#chook"/></svg></span>
          <i class="hd"></i>
          <span class="ic"><svg><use href="#v1"/></svg></span>
          <span class="ic"><svg><use href="#f9"/></svg></span>
          <span class="ic"><svg><use href="#v3"/></svg></span>
          <span class="ic dr"><svg><use href="#v4"/></svg></span>
          <span class="ic"><svg><use href="#v5"/></svg></span>
          <i class="hd"></i>
          <span class="ic dr"><svg><use href="#unf"/></svg></span>
          <span class="ic"><svg><use href="#unf2"/></svg></span>
          <i class="hd"></i>
          <span class="ic dn2"><svg><use href="#seam"/></svg></span>
          <span class="ic up3"><svg><use href="#dxf"/></svg></span>
          <span class="ic"><svg><use href="#target"/></svg></span>
          <i class="hd"></i>
          <span class="ic"><svg><use href="#dot"/></svg></span>
          <span class="ic"><svg><use href="#line"/></svg></span>
          <span class="ic"><svg><use href="#pl"/></svg></span>
          <span class="ic"><svg><use href="#box"/></svg></span>
          <span class="ic"><svg><use href="#block"/></svg></span>
        </div>
      </aside>
    </main>
    <div class="bar">
      <i class="vh first3"></i>
      <span class="ic"><svg><use href="#new"/></svg></span>
      <span class="ic"><svg><use href="#open"/></svg></span>
      <span class="ic"><svg><use href="#save"/></svg></span>
      <span class="ic"><svg><use href="#print"/></svg></span>
      <span class="ic"><svg><use href="#scis"/></svg></span>
      <span class="ic"><svg><use href="#copy"/></svg></span>
      <span class="ic"><svg><use href="#paste"/></svg></span>
      <span class="ic dr"><svg><use href="#undo"/></svg></span>
      <span class="ic dr"><svg><use href="#redo"/></svg></span>
      <span class="ic"><svg><use href="#whelp"/></svg></span>
      <i class="vh"></i>
      <span class="ic fx">f<small>(x)</small></span>
      <span class="ic"><svg><use href="#bubble"/></svg></span>
      <span class="ic lm3"><svg><use href="#chain"/></svg></span>
      <span class="ic lm3 dr"><svg><use href="#tbl"/></svg></span>
      <span class="ic"><svg><use href="#rel"/></svg></span>
      <span class="ic lp1 dr"><svg><use href="#lock"/></svg></span>
      <span class="ic lm3"><svg><use href="#param"/></svg></span>
      <label class="chk"><i class="box"></i>对齐视点</label>
      <i class="vh"></i>
      <span class="ic"><svg><use href="#fly"/></svg></span>
      <span class="ic"><svg><use href="#fit"/></svg></span>
      <span class="ic"><svg><use href="#move"/></svg></span>
      <span class="ic"><svg><use href="#rot"/></svg></span>
      <span class="ic"><svg><use href="#zin"/></svg></span>
      <span class="ic"><svg><use href="#zout"/></svg></span>
      <span class="ic"><svg><use href="#norm"/></svg></span>
      <span class="ic"><svg><use href="#split"/></svg></span>
      <span class="ic dr"><svg><use href="#cube"/></svg></span>
      <span class="ic dr"><svg><use href="#qhelp"/></svg></span>
      <span class="more">»</span>
      <div class="catia">
        <svg width="30" height="20" viewBox="0 0 30 20"><path d="M10 3c4-2 8-2 10-1M24 7c-6 0-8 3-4 5 3 2-1 6-7 6" fill="none" stroke="#c83018" stroke-width="1.800"/><path d="M9 5 5 16h5" fill="none" stroke="#14146e" stroke-width="1.800"/></svg>
        <span>CATIA</span>
      </div>
    </div>
    <footer class="status">
      <span class="msg">选择对象或命令</span>
      <div class="cmd"></div>
      <span class="sb"><svg width="14" height="12"><path d="M1.500 1.500h8v7h-8z" fill="none" stroke="#555"/><path d="M11 9h3" stroke="#555" stroke-width="2"/></svg></span>
      <span class="sb wide"><svg width="20" height="14"><rect x="1" y="1" width="17" height="12" rx="2" fill="#fff" stroke="#111"/><circle cx="9.500" cy="7" r="5" fill="#1060e0"/><path d="M9.500 3.500v1.500M9.500 6v4" stroke="#fff" stroke-width="1.600"/></svg></span>
    </footer>
  </div>
</div>
<div class="foot"><span>22:21</span></div>

<div class="wm" aria-hidden="true">
  <svg width="72" height="83" viewBox="0 0 72 83"><path d="M36 1 71 21V64L36 82 1 64V17Z" fill="#3aa8ea" fill-opacity=".55"/><path d="M36 1 71 21 36 40 20 22Z" fill="#8a9aa8" fill-opacity=".5"/><path d="M1 17 36 1 20 22V50L1 64Z" fill="#8cc4e8" fill-opacity=".25"/><path d="M20 30 36 21 56 32V54L36 65 20 54Z" fill="#b8e4fa" fill-opacity=".35"/></svg>
  <div class="wmt"><b>3D世界网</b><span>WWW.3DSJW.COM</span></div>
</div>
</body>
</html>
```

FILE: styles.css
```css
* { box-sizing: border-box; }
html, body { margin: 0; padding: 0; }
body {
  position: relative;
  width: 967px;
  height: 1047px;
  overflow: hidden;
  background: #2f3436;
  font-family: "Liberation Sans", "Noto Sans CJK SC", sans-serif;
  font-size: 12px;
  color: #222;
}
.defs { position: absolute; width: 0; height: 0; }
.screen { display: flex; height: 1040px; align-items: flex-start; }
.desk { width: 6px; height: 1033px; background: #dcdcdc; flex: none; padding-top: 591px; }
.thumb { height: 288px; background: #ababab; }
.win {
  flex: 1;
  height: 1040px;
  display: flex;
  flex-direction: column;
  border-left: 2px solid #1c6aa8;
  border-right: 1px solid #1c6aa8;
  border-bottom: 1px solid #1c6aa8;
  min-width: 0;
}

.title { height: 31px; background: #0063b1; display: flex; align-items: center; padding-left: 8px; color: #e4eefa; flex: none; }
.tlogo { width: 16px; height: 16px; flex: none; }
.ttext { margin-left: 5px; margin-bottom: 1px; font-family: "Noto Sans", "Noto Sans CJK SC", sans-serif; font-size: 12.5px; white-space: pre; word-spacing: .5px; }
.wctl { margin-left: auto; display: flex; }
.wbtn { width: 46px; height: 31px; display: flex; align-items: center; justify-content: center; }

.menu { height: 21px; background: #bccfe6; border-bottom: 2px solid #e6e6e6; display: flex; align-items: stretch; padding-left: 4px; flex: none; }
.mlogo { width: 18px; height: 18px; flex: none; }
.mi { width: 42px; line-height: 21px; font-size: 12.5px; color: #222; }
.mi.on { background: #c8c8c8; }
.mctl { margin-left: auto; display: flex; gap: 1px; padding: 1px 1px 0 0; }
.mbtn { width: 18px; height: 17px; background: #eef0f2; display: flex; align-items: center; justify-content: center; }

.main { display: flex; height: 925px; flex: none; }
.canvas { position: relative; flex: 1; background: #2f3536; border-left: 1px solid #6a6a6a; overflow: hidden; }
.model, .links { position: absolute; left: 0; top: 0; }
.axl text { fill: #f5e000; font: 14px "Liberation Sans", sans-serif; }
.axw text { fill: #e0e0e0; font: 13px "Liberation Sans", sans-serif; }

.tree { position: relative; list-style: none; margin: 0; padding: 0; color: #fff; font-size: 14px; }
.row { height: 28px; display: flex; align-items: center; gap: 3px; white-space: nowrap; }
.row.root { height: 27px; }
.root .tx { margin-bottom: 2px; }
.l0 { padding-left: 1px; }
.l1 { padding-left: 21px; }
.l2 { padding-left: 41px; }
.l3 { padding-left: 61px; }
.ti { width: 24px; height: 24px; flex: none; margin-top: 5px; }
.tx { position: relative; line-height: 18px; }
.boxed { outline: 1px solid #5a4a3a; outline-offset: 1px; border-radius: 2px; }
.sel { border-bottom: 1px solid #fff; line-height: 17px; }

.side {
  width: 77px;
  flex: none;
  display: flex;
  background: linear-gradient(90deg, #eeeeee 0, #bdbdbd 3px, #cbcbcb 8px, #c8c8c8 100%);
  overflow: hidden;
}
.col { display: flex; flex-direction: column; gap: 4px; align-items: center; height: 925px; }
.col:first-child { width: 40px; }
.col:last-child { width: 37px; }
.ic { position: relative; display: block; width: 24px; height: 24px; flex: none; }
.ic svg { display: block; width: 24px; height: 24px; }
.dr::after {
  content: "";
  position: absolute;
  right: -7px;
  bottom: -3px;
  border: 4px solid transparent;
  border-top: 5px solid #000;
  border-bottom: 0;
}
.hd {
  display: block;
  width: 16px;
  height: 4px;
  margin: 4px 0 5px;
  background: #e8e8e8;
  border: 1px solid #a8a8a8;
  border-radius: 1px;
  align-self: flex-start;
  margin-left: 5px;
  flex: none;
}
.hd.first { margin-top: 4px; }
.hd.first2 { margin-top: 5px; }
.hd.long { width: 26px; height: 2px; border: 0; background: #f0f0f0; }
.big svg { width: 26px; height: 26px; margin-left: -1px; }
.up1 { margin-top: -1px; }
.up2 { margin-top: -2px; }
.up3 { margin-top: -3px; }
.up4 { margin-top: -4px; }
.dn1 { margin-top: 1px; }
.dn2 { margin-top: 2px; }
.dn3 { margin-top: 7px; }
.dn4 { margin-top: 4px; }
.hd.dn1 { margin-top: 5px; }
.hd.up5 { margin-top: -1px; }

.bar {
  height: 37px;
  flex: none;
  display: flex;
  align-items: center;
  gap: 4px;
  padding: 3px 0 0 5px;
  border-top: 2px solid #f4f4f4;
  background: linear-gradient(180deg, #cfcfcf, #c4c4c4 60%, #c9c9c9 100%);
  border-bottom: 1px solid #a8a8a8;
  position: relative;
}
.bar .ic svg { width: 21px; height: 21px; margin: 2px auto 0; }
.vh {
  width: 4px;
  height: 15px;
  background: #e8e8e8;
  border: 1px solid #a8a8a8;
  flex: none;
  align-self: flex-start;
  margin: 1px 3px 0 8px;
}
.vh.first3 { margin: 1px 3px 0 0; }
.fx { font: italic 700 21px/24px "Liberation Serif", serif; color: #111; text-align: center; white-space: nowrap; }
.fx small { font: 700 10px "Liberation Sans", sans-serif; }
.lm3 { margin-left: -3px; }
.lp1 { margin-left: 1px; }
.chk { display: flex; align-items: center; gap: 3px; margin-left: 4px; font-size: 12px; color: #333; width: 64px; flex: none; white-space: nowrap; }
.box { width: 12px; height: 12px; background: #ffffd8; border: 1px solid #555; flex: none; }
.more { margin-left: 22px; color: #eee; font-size: 15px; }
.catia { position: relative; margin-left: auto; margin-right: 1px; width: 50px; text-align: center; line-height: 9px; display: flex; flex-direction: column; align-items: center; }
.catia svg { height: 20px; }
.catia span { font: italic 700 9.500px "Liberation Sans", sans-serif; color: #14146e; letter-spacing: .3px; }

.status { height: 25px; flex: none; background: #dde7f2; display: flex; align-items: center; padding: 0 1px 0 3px; gap: 2px; }
.msg { flex: 1; color: #333; font-size: 12px; }
.cmd { width: 300px; height: 21px; background: #fff; border: 1px solid #888; }
.sb { width: 30px; height: 21px; display: flex; align-items: center; justify-content: center; background: #c8ced4; border: 1px solid #e8e8e8; }
.sb.wide { width: 33px; }

.foot { height: 7px; overflow: hidden; padding-left: 863px; color: #fff; font-size: 10px; font-weight: 700; line-height: 14px; }

.wm { position: absolute; left: 685px; top: 951px; display: flex; gap: 10px; pointer-events: none; }
.wmt { color: rgba(255,255,255,.36); display: flex; flex-direction: column; margin-top: 16px; }
.wmt b { font: 700 36px/26px "Noto Sans CJK SC", sans-serif; letter-spacing: 3px; white-space: nowrap; }
.wmt span { margin-top: 19px; font: 700 12px/10px "Liberation Sans", sans-serif; letter-spacing: 4.200px; white-space: nowrap; }
```
